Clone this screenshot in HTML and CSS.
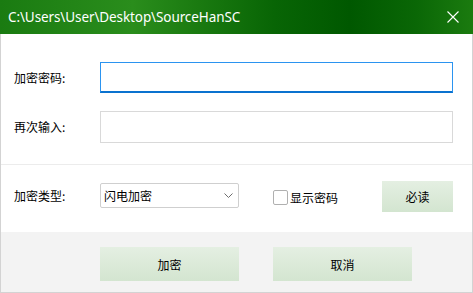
FILE: index.html
```html
<!DOCTYPE html>
<html lang="zh-CN">
<head>
    <meta charset="UTF-8">
    <title>SourceHanSC</title>
    <link rel="stylesheet" href="styles.css">
</head>
<body>
    <div class="window">
        <div class="titlebar">
            <span class="title">C:\Users\User\Desktop\SourceHanSC</span>
            <svg class="close" width="12" height="12" viewBox="0 0 12 12">
                <path d="M0.5 0.5 L11.5 11.5 M11.5 0.5 L0.5 11.5" stroke="#fff" stroke-width="1.1" fill="none" />
            </svg>
        </div>

        <div class="body">
            <!-- password fields -->
            <div class="fields">
                <label class="label">加密密码:</label>
                <div class="input focused"></div>
                <label class="label">再次输入:</label>
                <div class="input second"></div>
            </div>

            <!-- options -->
            <div class="options">
                <span class="label">加密类型:</span>
                <div class="select">
                    <span>闪电加密</span>
                    <svg width="9" height="5" viewBox="0 0 9 5">
                        <path d="M0.5 0.5 L4.5 4.5 L8.5 0.5" stroke="#6d6d6d" stroke-width="1" fill="none" />
                    </svg>
                </div>
                <div class="check">
                    <span class="box"></span>
                    <span>显示密码</span>
                </div>
                <button class="btn small">必读</button>
            </div>

            <!-- footer buttons -->
            <div class="footer">
                <button class="btn wide">加密</button>
                <button class="btn wide">取消</button>
            </div>
        </div>
    </div>
</body>
</html>
```

FILE: styles.css
```css
body {
    margin: 0;
    padding: 0;
    font-family: "Noto Sans CJK SC", "Noto Sans", sans-serif;
    font-size: 12px;
    color: #000;
    background: #fff;
}

.window {
    width: 473px;
    height: 293px;
    display: flex;
    flex-direction: column;
}

.titlebar {
    height: 34px;
    display: flex;
    align-items: center;
    justify-content: space-between;
    padding: 0 14px 0 8px;
    background: linear-gradient(90deg, #1a7b11 0%, #2a8d1c 28%, #1a7a10 42%, #086505 58%, #005800 74%, #0a6706 88%, #1b7b0f 100%);
}

.title {
    color: #fff;
    font-family: "Noto Sans", sans-serif;
    font-size: 13.5px;
    letter-spacing: -0.1px;
}

.close {
    display: block;
}

.body {
    flex: 1;
    display: flex;
    flex-direction: column;
    border: 1px solid #d3d3d3;
    border-top: none;
}

.fields {
    display: grid;
    grid-template-columns: 86px 353px;
    row-gap: 18px;
    align-items: center;
    padding: 28px 0 21px 13px;
    border-bottom: 1px solid #ececec;
}

.label {
    line-height: 16px;
}

.input {
    box-sizing: border-box;
    height: 31px;
    background: #fff;
    border: 1px solid #d9d9d9;
}

.input.focused {
    border: 1px solid #2b94f0;
    border-bottom: 2px solid #0a72cf;
}

.input.second {
    height: 32px;
}

.options {
    box-sizing: border-box;
    height: 67px;
    display: flex;
    align-items: center;
    padding: 0 0 5px 13px;
}

.options .label {
    width: 86px;
}

.select {
    box-sizing: border-box;
    width: 139px;
    height: 25px;
    display: flex;
    align-items: center;
    justify-content: space-between;
    padding: 0 5px 0 3px;
    border: 1px solid #cfcfcf;
    border-radius: 2px;
    margin-top: -1px;
}

.select svg {
    display: block;
}

.check {
    display: flex;
    align-items: center;
    gap: 2px;
    margin-left: 34px;
    width: 109px;
    margin-top: 3px;
}

.box {
    box-sizing: border-box;
    width: 15px;
    height: 15px;
    border: 1px solid #b0b0b0;
    border-radius: 2px;
    background: #fff;
}

.btn {
    border: none;
    padding: 0;
    font-family: "Noto Sans CJK SC", sans-serif;
    font-size: 12px;
    color: #000;
    background: linear-gradient(180deg, #e4efe2 0%, #d3e5d0 100%);
}

.btn.small {
    width: 71px;
    height: 31px;
    margin-top: 1px;
}

.footer {
    flex: 1;
    display: flex;
    gap: 34px;
    padding: 15px 0 0 99px;
    background: #f3f3f3;
}

.btn.wide {
    width: 139px;
    height: 34px;
}
```
